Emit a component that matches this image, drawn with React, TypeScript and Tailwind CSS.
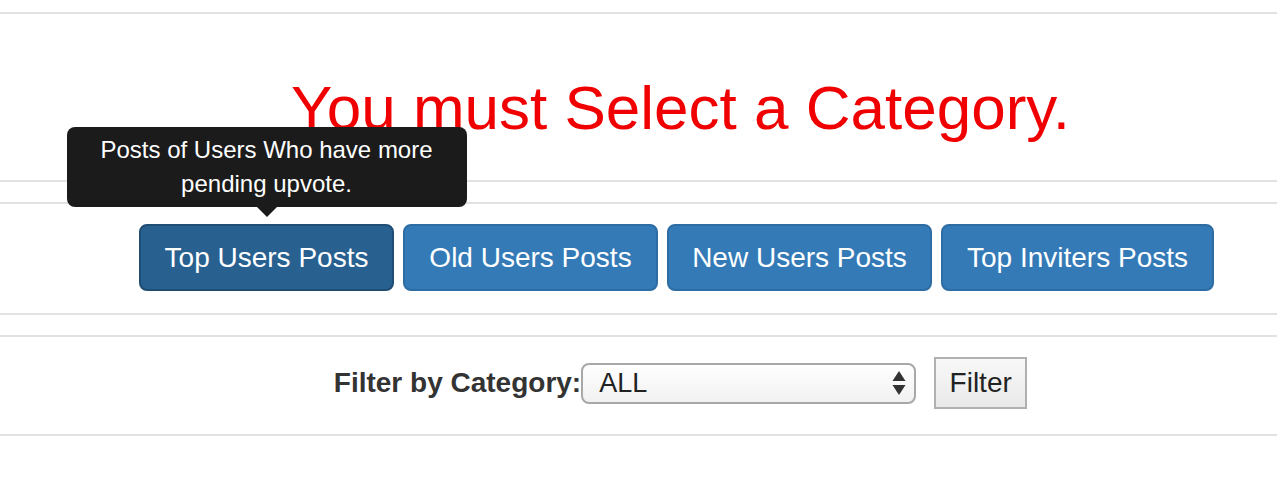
import React from "react";

const Line = () => <div className="h-[2px] w-full bg-[#e2e2e2]" />;

export default function App() {
  const font = { fontFamily: '"Liberation Sans", Arial, Helvetica, sans-serif' };
  const buttons = [
    { label: "Top Users Posts", w: "w-[255px]", active: true },
    { label: "Old Users Posts", w: "w-[255px]", active: false },
    { label: "New Users Posts", w: "w-[265px]", active: false },
    { label: "Top Inviters Posts", w: "w-[273px]", active: false },
  ];
  return (
    <div className="w-[1277px] h-[489px] bg-white overflow-hidden" style={font}>
      <div className="h-[12px]" />
      <Line />
      <div className="h-[166px] pt-[63px] pl-[84px] flex justify-center">
        <h1 className="text-[62px] leading-none font-normal text-[#f00000] whitespace-nowrap">
          You must Select a Category.
        </h1>
      </div>
      <Line />
      <div className="h-[20px]" />
      <Line />
      <div className="h-[109px] pt-[20px] pl-[76px] flex justify-center items-start gap-[9px]">
        {buttons.map((b) => (
          <div key={b.label} className="relative">
            <div
              className={`${b.w} h-[67px] flex items-center justify-center rounded-[8px] border-2 text-white text-[28px] ${
                b.active ? "bg-[#286090] border-[#204d74]" : "bg-[#337ab7] border-[#2e6da4]"
              }`}
            >
              {b.label}
            </div>
            {b.active && (
              <div className="absolute left-1/2 -translate-x-1/2 bottom-[74px] w-[400px] flex flex-col items-center">
                <div className="w-[400px] h-[80px] bg-[#1b1b1b] rounded-[8px] px-[16px] py-[6px] text-white text-[24px] leading-[34px] text-center">
                  Posts of Users Who have more pending upvote.
                </div>
                <div className="w-0 h-0 border-l-[10px] border-r-[10px] border-t-[10px] border-l-transparent border-r-transparent border-t-[#1b1b1b]" />
              </div>
            )}
          </div>
        ))}
      </div>
      <Line />
      <div className="h-[20px]" />
      <Line />
      <div className="h-[97px] pt-[20px] pl-[84px] flex justify-center items-start">
        <div className="flex items-center h-[52px]">
          <span className="text-[28px] font-bold text-[#333]">Filter by Category:</span>
          <div className="w-[335px] h-[41px] rounded-[8px] border-2 border-[#a8a8a8] bg-gradient-to-b from-white to-[#f1f1f1] flex items-center justify-between pl-[16px] pr-[8px]">
            <span className="text-[27px] text-[#222] leading-none">ALL</span>
            <svg width="14" height="26" viewBox="0 0 14 26">
              <path d="M7 1 L13.5 11 L0.5 11 Z" fill="#333" />
              <path d="M0.5 15 L13.5 15 L7 25 Z" fill="#333" />
            </svg>
          </div>
          <div className="ml-[18px] w-[93px] h-[52px] border-2 border-[#b0b0b0] bg-gradient-to-b from-[#f8f8f8] to-[#e9e9e9] flex items-center justify-center text-[28px] text-[#222]">
            Filter
          </div>
        </div>
      </div>
      <Line />
    </div>
  );
}
